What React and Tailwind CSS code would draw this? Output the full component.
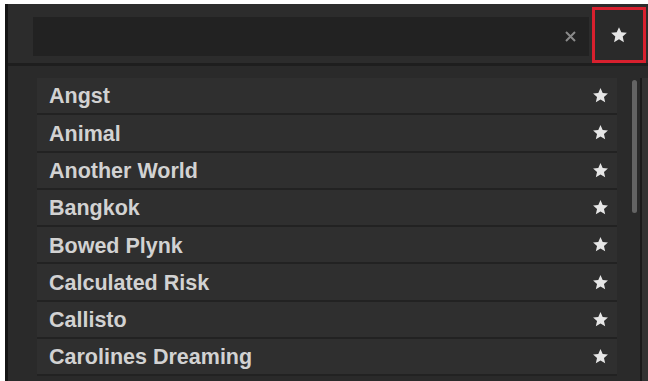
import React from "react";

const items = [
  "Angst",
  "Animal",
  "Another World",
  "Bangkok",
  "Bowed Plynk",
  "Calculated Risk",
  "Callisto",
  "Carolines Dreaming",
];

function Star({ size = 15, color = "#e6e6e6" }) {
  return (
    <svg width={size} height={size} viewBox="0 0 24 24">
      <path
        d="M12 1.5l3.1 6.9 7.4.7-5.6 5 1.7 7.4L12 17.6l-6.6 3.9 1.7-7.4-5.6-5 7.4-.7z"
        fill={color}
      />
    </svg>
  );
}

export default function App() {
  return (
    <div
      className="w-[648px] h-[381px] bg-white pt-[4px] pl-[5px] overflow-hidden"
      style={{ fontFamily: '"Liberation Sans", Arial, sans-serif' }}
    >
      <div className="h-[377px] flex flex-col bg-[#2b2b2b] border-l-[3px] border-[#151515]">
        {/* header */}
        <div className="h-[62px] shrink-0 flex items-start bg-[#2c2c2c] border-b-[3px] border-[#1e1e1e]">
          <div className="mt-[13px] ml-[25px] w-[556px] h-[39px] bg-[#222222] flex items-center justify-end pr-[13px]">
            <svg width="11" height="11" viewBox="0 0 11 11">
              <path d="M1 1L10 10M10 1L1 10" stroke="#8a8a8a" strokeWidth="2" />
            </svg>
          </div>
          <div className="mt-[3px] ml-[3px] w-[54px] h-[56px] border-[3px] border-[#d8202e] flex items-center justify-center bg-[#2a2a2a]">
            <Star size={18} />
          </div>
        </div>
        {/* list */}
        <div className="flex-1 flex pt-[12px] bg-[#2a2a2a]">
          <div className="ml-[29px] w-[580px] flex flex-col">
            {items.map((name) => (
              <div
                key={name}
                className="h-[37.3px] shrink-0 flex items-center justify-between pl-[12px] pr-[8px] bg-[#2f2f2f] border-b-[2px] border-[#222222]"
              >
                <span className="pt-[3px] text-[21.5px] font-bold text-[#d2d2d2] leading-none">
                  {name}
                </span>
                <Star size={17} />
              </div>
            ))}
          </div>
          <div className="ml-[15px] w-[5px] h-[133px] mt-[2px] rounded-sm bg-[#646464]" />
          <div className="ml-[3px] w-[2px] bg-[#1a1a1a]" />
          <div className="flex-1 bg-[#323232]" />
        </div>
      </div>
    </div>
  );
}
